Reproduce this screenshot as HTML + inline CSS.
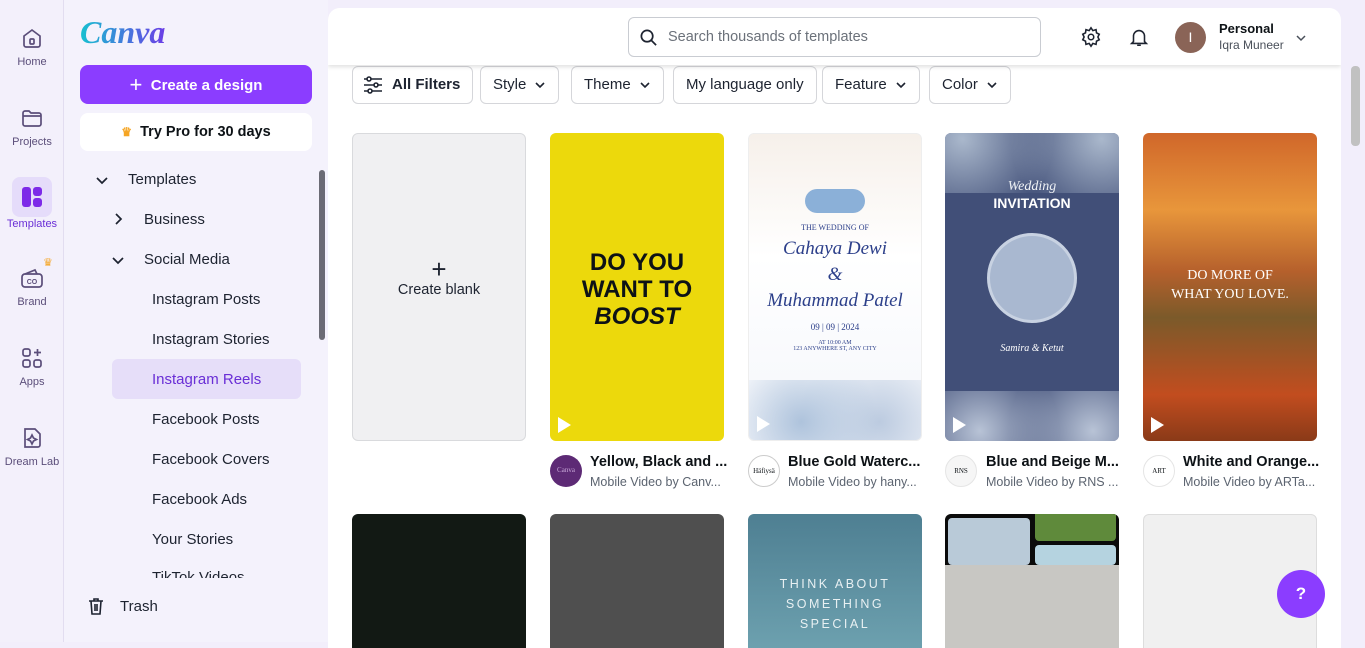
<!DOCTYPE html>
<html><head><meta charset="utf-8"><style>
*{box-sizing:border-box;margin:0;padding:0}
body{width:1365px;height:642px;overflow:hidden;background:#f2eefb;font-family:"Liberation Sans",sans-serif;position:relative;color:#0d1216}
.rail{position:absolute;left:0;top:0;width:64px;height:642px;border-right:1px solid #e2ddf0;background:#f3f0fb}
.ri{position:absolute;left:0;width:64px;text-align:center;font-size:11px;color:#5b4e7a}
.ri svg{display:block;margin:0 auto 6px}
.panel{position:absolute;left:64px;top:0;width:264px;height:642px;background:#f4f2fc}
.main{position:absolute;left:328px;top:8px;width:1013px;height:640px;background:#fff;border-radius:12px 12px 0 0;overflow:hidden}
.top{position:absolute;left:0;top:0;width:1013px;height:57px;background:#fff;box-shadow:0 2px 4px rgba(0,0,0,.12);z-index:2}
.nav{position:absolute;font-size:15px;color:#1d2330}
.btn{position:absolute;top:58px;height:38px;border:1px solid #d5d6da;border-radius:6px;font-size:15px;line-height:36px;padding:0 12px;color:#1d2330;background:#fff;white-space:nowrap}
.btn svg,.ch{vertical-align:middle;margin-left:8px}
.card{position:absolute;width:174px;border-radius:6px;overflow:hidden}
.t{position:absolute;font-size:14.5px;font-weight:bold;white-space:nowrap}
.s{position:absolute;font-size:12.5px;color:#5c6470;white-space:nowrap}
.av{position:absolute;width:32px;height:32px;border-radius:50%;border:1px solid #ccc;font-size:7px;text-align:center;line-height:30px;font-family:"Liberation Serif",serif}
.play{position:absolute;left:8px;bottom:8px;width:0;height:0;border-left:13px solid #fff;border-top:8px solid transparent;border-bottom:8px solid transparent}
</style></head><body>
<div class="rail">
 <div class="ri" style="top:26px"><svg width="24" height="24" viewBox="0 0 24 24" fill="none" stroke="#5b4e7a" stroke-width="1.7"><path d="M4 10l8-6 8 6v9a2 2 0 0 1-2 2H6a2 2 0 0 1-2-2z"/><rect x="10" y="13" width="4" height="5" rx="1"/></svg>Home</div>
 <div class="ri" style="top:106px"><svg width="24" height="24" viewBox="0 0 24 24" fill="none" stroke="#5b4e7a" stroke-width="1.7"><path d="M3 7a2 2 0 0 1 2-2h4l2 2h8a2 2 0 0 1 2 2v9a2 2 0 0 1-2 2H5a2 2 0 0 1-2-2z"/><path d="M3 10h18"/></svg>Projects</div>
 <div style="position:absolute;left:12px;top:177px;width:40px;height:40px;border-radius:8px;background:#e5dcfa"></div>
 <div class="ri" style="top:185px;color:#6a2fd6"><svg width="24" height="24" viewBox="0 0 24 24"><rect x="2" y="2" width="9" height="20" rx="3" fill="#7d2ae8"/><rect x="13" y="2" width="9" height="9" rx="3" fill="#7d2ae8"/><rect x="13" y="13" width="9" height="9" rx="3" fill="#7d2ae8"/></svg><span style="position:relative;top:3px">Templates</span></div>
 <div class="ri" style="top:266px"><svg width="24" height="24" viewBox="0 0 24 24" fill="none" stroke="#5b4e7a" stroke-width="1.7"><rect x="2" y="8" width="20" height="13" rx="3"/><path d="M5 8l10-4 2 4"/><text x="12" y="18" font-size="7" text-anchor="middle" fill="#5b4e7a" stroke="none" font-weight="bold">CO</text></svg>Brand</div>
 <div style="position:absolute;left:43px;top:256px;color:#f5a524;font-size:11px">♛</div>
 <div class="ri" style="top:346px"><svg width="24" height="24" viewBox="0 0 24 24" fill="none" stroke="#5b4e7a" stroke-width="1.7"><rect x="3" y="3" width="7" height="7" rx="2"/><rect x="3" y="14" width="7" height="7" rx="2"/><rect x="14" y="14" width="7" height="7" rx="2"/><path d="M17.5 3v7M14 6.5h7"/></svg>Apps</div>
 <div class="ri" style="top:426px"><svg width="24" height="24" viewBox="0 0 24 24" fill="none" stroke="#5b4e7a" stroke-width="1.7"><path d="M5 3h10l5 5v11a2 2 0 0 1-2 2H5z"/><path d="M12 9l1.5 3 3 1.5-3 1.5-1.5 3-1.5-3-3-1.5 3-1.5z"/></svg>Dream Lab</div>
</div>
<div class="panel">
 <div style="position:absolute;left:16px;top:14px;font-family:'Liberation Serif',serif;font-style:italic;font-weight:bold;font-size:32px;background:linear-gradient(90deg,#16c0d0,#6b3ee6);-webkit-background-clip:text;color:transparent">Canva</div>
 <div style="position:absolute;left:16px;top:65px;width:232px;height:39px;background:#8b3dff;border-radius:8px;color:#fff;font-weight:bold;font-size:15px;text-align:center;line-height:39px"><span style="font-weight:normal;font-size:22px;vertical-align:-2px">+</span>&nbsp; Create a design</div>
 <div style="position:absolute;left:16px;top:113px;width:232px;height:38px;background:#fff;border-radius:8px;font-weight:bold;font-size:14.5px;text-align:center;line-height:38px"><span style="color:#f5a524;font-size:12px">♛</span>&nbsp; Try Pro for 30 days</div>
 <div style="position:absolute;left:255px;top:170px;width:6px;height:170px;background:#6b6b75;border-radius:3px"></div>
 <svg style="position:absolute;left:31px;top:173px" width="14" height="14" viewBox="0 0 14 14" fill="none" stroke="#1d2330" stroke-width="1.7"><path d="M2 5l5 5 5-5"/></svg>
 <div class="nav" style="left:64px;top:171px">Templates</div>
 <svg style="position:absolute;left:47px;top:212px" width="14" height="14" viewBox="0 0 14 14" fill="none" stroke="#1d2330" stroke-width="1.7"><path d="M5 2l5 5-5 5"/></svg>
 <div class="nav" style="left:80px;top:211px">Business</div>
 <svg style="position:absolute;left:47px;top:253px" width="14" height="14" viewBox="0 0 14 14" fill="none" stroke="#1d2330" stroke-width="1.7"><path d="M2 5l5 5 5-5"/></svg>
 <div class="nav" style="left:80px;top:251px">Social Media</div>
 <div class="nav" style="left:88px;top:291px">Instagram Posts</div>
 <div class="nav" style="left:88px;top:331px">Instagram Stories</div>
 <div style="position:absolute;left:48px;top:359px;width:189px;height:40px;background:#e6def9;border-radius:6px"></div>
 <div class="nav" style="left:88px;top:371px;color:#6a2fd6">Instagram Reels</div>
 <div class="nav" style="left:88px;top:411px">Facebook Posts</div>
 <div class="nav" style="left:88px;top:451px">Facebook Covers</div>
 <div class="nav" style="left:88px;top:491px">Facebook Ads</div>
 <div class="nav" style="left:88px;top:531px">Your Stories</div>
 <div class="nav" style="left:88px;top:569px;height:9px;overflow:hidden">TikTok Videos</div>
 <div style="position:absolute;left:0;top:580px;width:264px;height:62px;background:#f4f2fc"></div>
 <svg style="position:absolute;left:22px;top:596px" width="20" height="20" viewBox="0 0 20 20" fill="none" stroke="#1d2330" stroke-width="1.6"><path d="M3 5h14M8 5V3h4v2M5 5l1 13h8l1-13M9 8v7M11 8v7"/></svg>
 <div class="nav" style="left:56px;top:598px">Trash</div>
</div>
<div class="main">
 <div class="top">
  <div style="position:absolute;left:300px;top:9px;width:413px;height:40px;border:1px solid #c9ccd2;border-radius:6px;font-size:14.5px;color:#6b717a;line-height:38px;padding-left:39px">Search thousands of templates
   <svg style="position:absolute;left:10px;top:10px" width="19" height="19" viewBox="0 0 20 20" fill="none" stroke="#1d2330" stroke-width="1.8"><circle cx="8.5" cy="8.5" r="6"/><path d="M13 13l5 5"/></svg></div>
  <svg style="position:absolute;left:752px;top:18px" width="22" height="22" viewBox="0 0 24 24" fill="none" stroke="#1d2330" stroke-width="1.7"><circle cx="12" cy="12" r="3"/><path d="M12 2l2 3 3.5-1 .5 3.5 3 1.5-1.5 3 1.5 3-3 1.5-.5 3.5-3.5-1-2 3-2-3-3.5 1-.5-3.5-3-1.5 1.5-3L3 9l3-1.5.5-3.5 3.5 1z"/></svg>
  <svg style="position:absolute;left:800px;top:18px" width="22" height="22" viewBox="0 0 24 24" fill="none" stroke="#1d2330" stroke-width="1.7"><path d="M6 17V11a6 6 0 0 1 12 0v6l2 2H4z"/><path d="M10 21h4"/></svg>
  <div style="position:absolute;left:847px;top:14px;width:31px;height:31px;border-radius:50%;background:#8a6457;color:#fff;text-align:center;line-height:31px;font-size:14px">I</div>
  <div style="position:absolute;left:891px;top:13px;font-size:13px;font-weight:bold">Personal</div>
  <div style="position:absolute;left:891px;top:30px;font-size:12px;color:#4a505a">Iqra Muneer</div>
  <svg style="position:absolute;left:967px;top:25px" width="12" height="10" viewBox="0 0 12 10" fill="none" stroke="#4a505a" stroke-width="1.5"><path d="M2 3l4 4 4-4"/></svg>
 </div>
 <div class="btn" style="left:24px;font-weight:bold;padding-left:39px">All Filters
  <svg style="position:absolute;left:10px;top:9px;margin:0" width="20" height="18" viewBox="0 0 20 18" fill="none" stroke="#1d2330" stroke-width="1.6"><path d="M1 3h18M1 9h18M1 15h18"/><circle cx="6" cy="3" r="2" fill="#fff"/><circle cx="13" cy="9" r="2" fill="#fff"/><circle cx="7" cy="15" r="2" fill="#fff"/></svg></div>
 <div class="btn" style="left:152px">Style<svg width="12" height="10" viewBox="0 0 12 10" fill="none" stroke="#1d2330" stroke-width="1.6"><path d="M2 3l4 4 4-4"/></svg></div>
 <div class="btn" style="left:243px">Theme<svg width="12" height="10" viewBox="0 0 12 10" fill="none" stroke="#1d2330" stroke-width="1.6"><path d="M2 3l4 4 4-4"/></svg></div>
 <div class="btn" style="left:345px">My language only</div>
 <div class="btn" style="left:494px">Feature<svg width="12" height="10" viewBox="0 0 12 10" fill="none" stroke="#1d2330" stroke-width="1.6"><path d="M2 3l4 4 4-4"/></svg></div>
 <div class="btn" style="left:601px">Color<svg width="12" height="10" viewBox="0 0 12 10" fill="none" stroke="#1d2330" stroke-width="1.6"><path d="M2 3l4 4 4-4"/></svg></div>

 <div class="card" style="left:24px;top:125px;height:308px;background:#f0f0f2;border:1px solid #d9dadd;text-align:center;font-size:14.5px;color:#1d2330"><div style="font-size:26px;margin-top:122px;line-height:26px">+</div>Create blank</div>
 <div class="card" style="left:222px;top:125px;height:308px;background:#ecd90c;text-align:center;font-family:'Liberation Sans Narrow','Liberation Sans',sans-serif;font-weight:bold;font-size:24px;line-height:27px;padding-top:116px">DO YOU<br>WANT TO<br><i>BOOST</i><div class="play"></div></div>
 <div class="card" style="left:420px;top:125px;height:308px;background:linear-gradient(#f6f0ea,#fff 40%,#f4f6fb);border:1px solid #eee;text-align:center;font-family:'Liberation Serif',serif;color:#2c3f8a">
  <div style="margin:55px auto 0;width:60px;height:24px;background:#8bb0d8;border-radius:12px"></div>
  <div style="font-size:8px;margin-top:10px">THE WEDDING OF</div>
  <div style="font-size:19px;font-style:italic;line-height:26px;margin-top:4px">Cahaya Dewi<br>&amp;<br>Muhammad Patel</div>
  <div style="font-size:9px;margin-top:8px">09 | 09 | 2024</div>
  <div style="font-size:6px;margin-top:8px">AT 10:00 AM<br>123 ANYWHERE ST, ANY CITY</div>
  <div style="position:absolute;left:0;bottom:0;width:174px;height:60px;background:radial-gradient(circle at 30% 70%,#aec3dc,transparent 60%),radial-gradient(circle at 75% 70%,#bccbe0,transparent 60%)"></div><div class="play"></div></div>
 <div class="card" style="left:617px;top:125px;height:308px;background:#414f78;text-align:center;color:#fff">
  <div style="position:absolute;left:0;top:0;width:174px;height:60px;background:radial-gradient(circle at 10% 10%,#aab8cc,transparent 55%),radial-gradient(circle at 90% 10%,#aab8cc,transparent 55%)"></div>
  <div style="font-family:'Liberation Serif',serif;font-style:italic;font-size:14px;margin-top:46px">Wedding</div>
  <div style="font-weight:bold;font-size:14px">INVITATION</div>
  <div style="margin:22px auto 0;width:90px;height:90px;border-radius:50%;background:#a9b8d0;border:3px solid #c8d2e2"></div>
  <div style="font-size:10px;font-style:italic;margin-top:20px;font-family:'Liberation Serif',serif">Samira &amp; Ketut</div>
  <div style="position:absolute;left:0;bottom:0;width:174px;height:50px;background:radial-gradient(circle at 20% 80%,#b8c3d6,transparent 55%),radial-gradient(circle at 85% 80%,#b8c3d6,transparent 55%)"></div><div class="play"></div></div>
 <div class="card" style="left:815px;top:125px;height:308px;background:linear-gradient(#d0672a,#e8963b 25%,#b5602c 45%,#7b5a2a 60%,#c24d1f 85%,#8a3a18);text-align:center;color:#fff;font-family:'Liberation Serif',serif;font-size:14px;padding-top:133px;line-height:19px">DO MORE OF<br>WHAT YOU LOVE.<div class="play"></div></div>

 <div class="av" style="left:222px;top:447px;background:#5d2a75;color:#c9a9d9;border:none">Canva</div>
 <div class="t" style="left:262px;top:446px">Yellow, Black and ...</div><div class="s" style="left:262px;top:467px">Mobile Video by Canv...</div>
 <div class="av" style="left:420px;top:447px;background:#fff">Häfiysä</div>
 <div class="t" style="left:460px;top:446px">Blue Gold Waterc...</div><div class="s" style="left:460px;top:467px">Mobile Video by hany...</div>
 <div class="av" style="left:617px;top:447px;background:#f6f6f6;border-color:#e5e5e5">RNS</div>
 <div class="t" style="left:658px;top:446px">Blue and Beige M...</div><div class="s" style="left:658px;top:467px">Mobile Video by RNS ...</div>
 <div class="av" style="left:815px;top:447px;background:#fff;border-color:#e5e5e5">ART</div>
 <div class="t" style="left:855px;top:446px">White and Orange...</div><div class="s" style="left:855px;top:467px">Mobile Video by ARTa...</div>

 <div class="card" style="left:24px;top:506px;height:140px;background:#121914"></div>
 <div class="card" style="left:222px;top:506px;height:140px;background:#4f4f4f"></div>
 <div class="card" style="left:420px;top:506px;height:140px;background:linear-gradient(#4e7f92,#6ea2b0);text-align:center;color:#e8f0f2;font-size:12.5px;letter-spacing:2.5px;line-height:20px;padding-top:60px">THINK ABOUT<br>SOMETHING<br>SPECIAL</div>
 <div class="card" style="left:617px;top:506px;height:140px;background:#c8c7c3"><div style="height:51px;background:#0b0b0b;position:relative"><div style="position:absolute;left:3px;top:4px;width:82px;height:47px;background:#b9cad8;border-radius:4px"></div><div style="position:absolute;left:90px;top:0;width:81px;height:27px;background:#5f8a3b;border-radius:0 0 4px 4px"></div><div style="position:absolute;left:90px;top:31px;width:81px;height:20px;background:#b5d3e0;border-radius:4px"></div></div></div>
 <div class="card" style="left:815px;top:506px;height:140px;background:#f0f0f0;border:1px solid #ddd"></div>
</div>
<div style="position:absolute;left:1351px;top:66px;width:9px;height:80px;background:#c1c1c1;border-radius:4px"></div>
<div style="position:absolute;left:1277px;top:570px;width:48px;height:48px;border-radius:50%;background:#8b3dff;color:#fff;font-weight:bold;font-size:17px;text-align:center;line-height:48px">?</div>
</body></html>
